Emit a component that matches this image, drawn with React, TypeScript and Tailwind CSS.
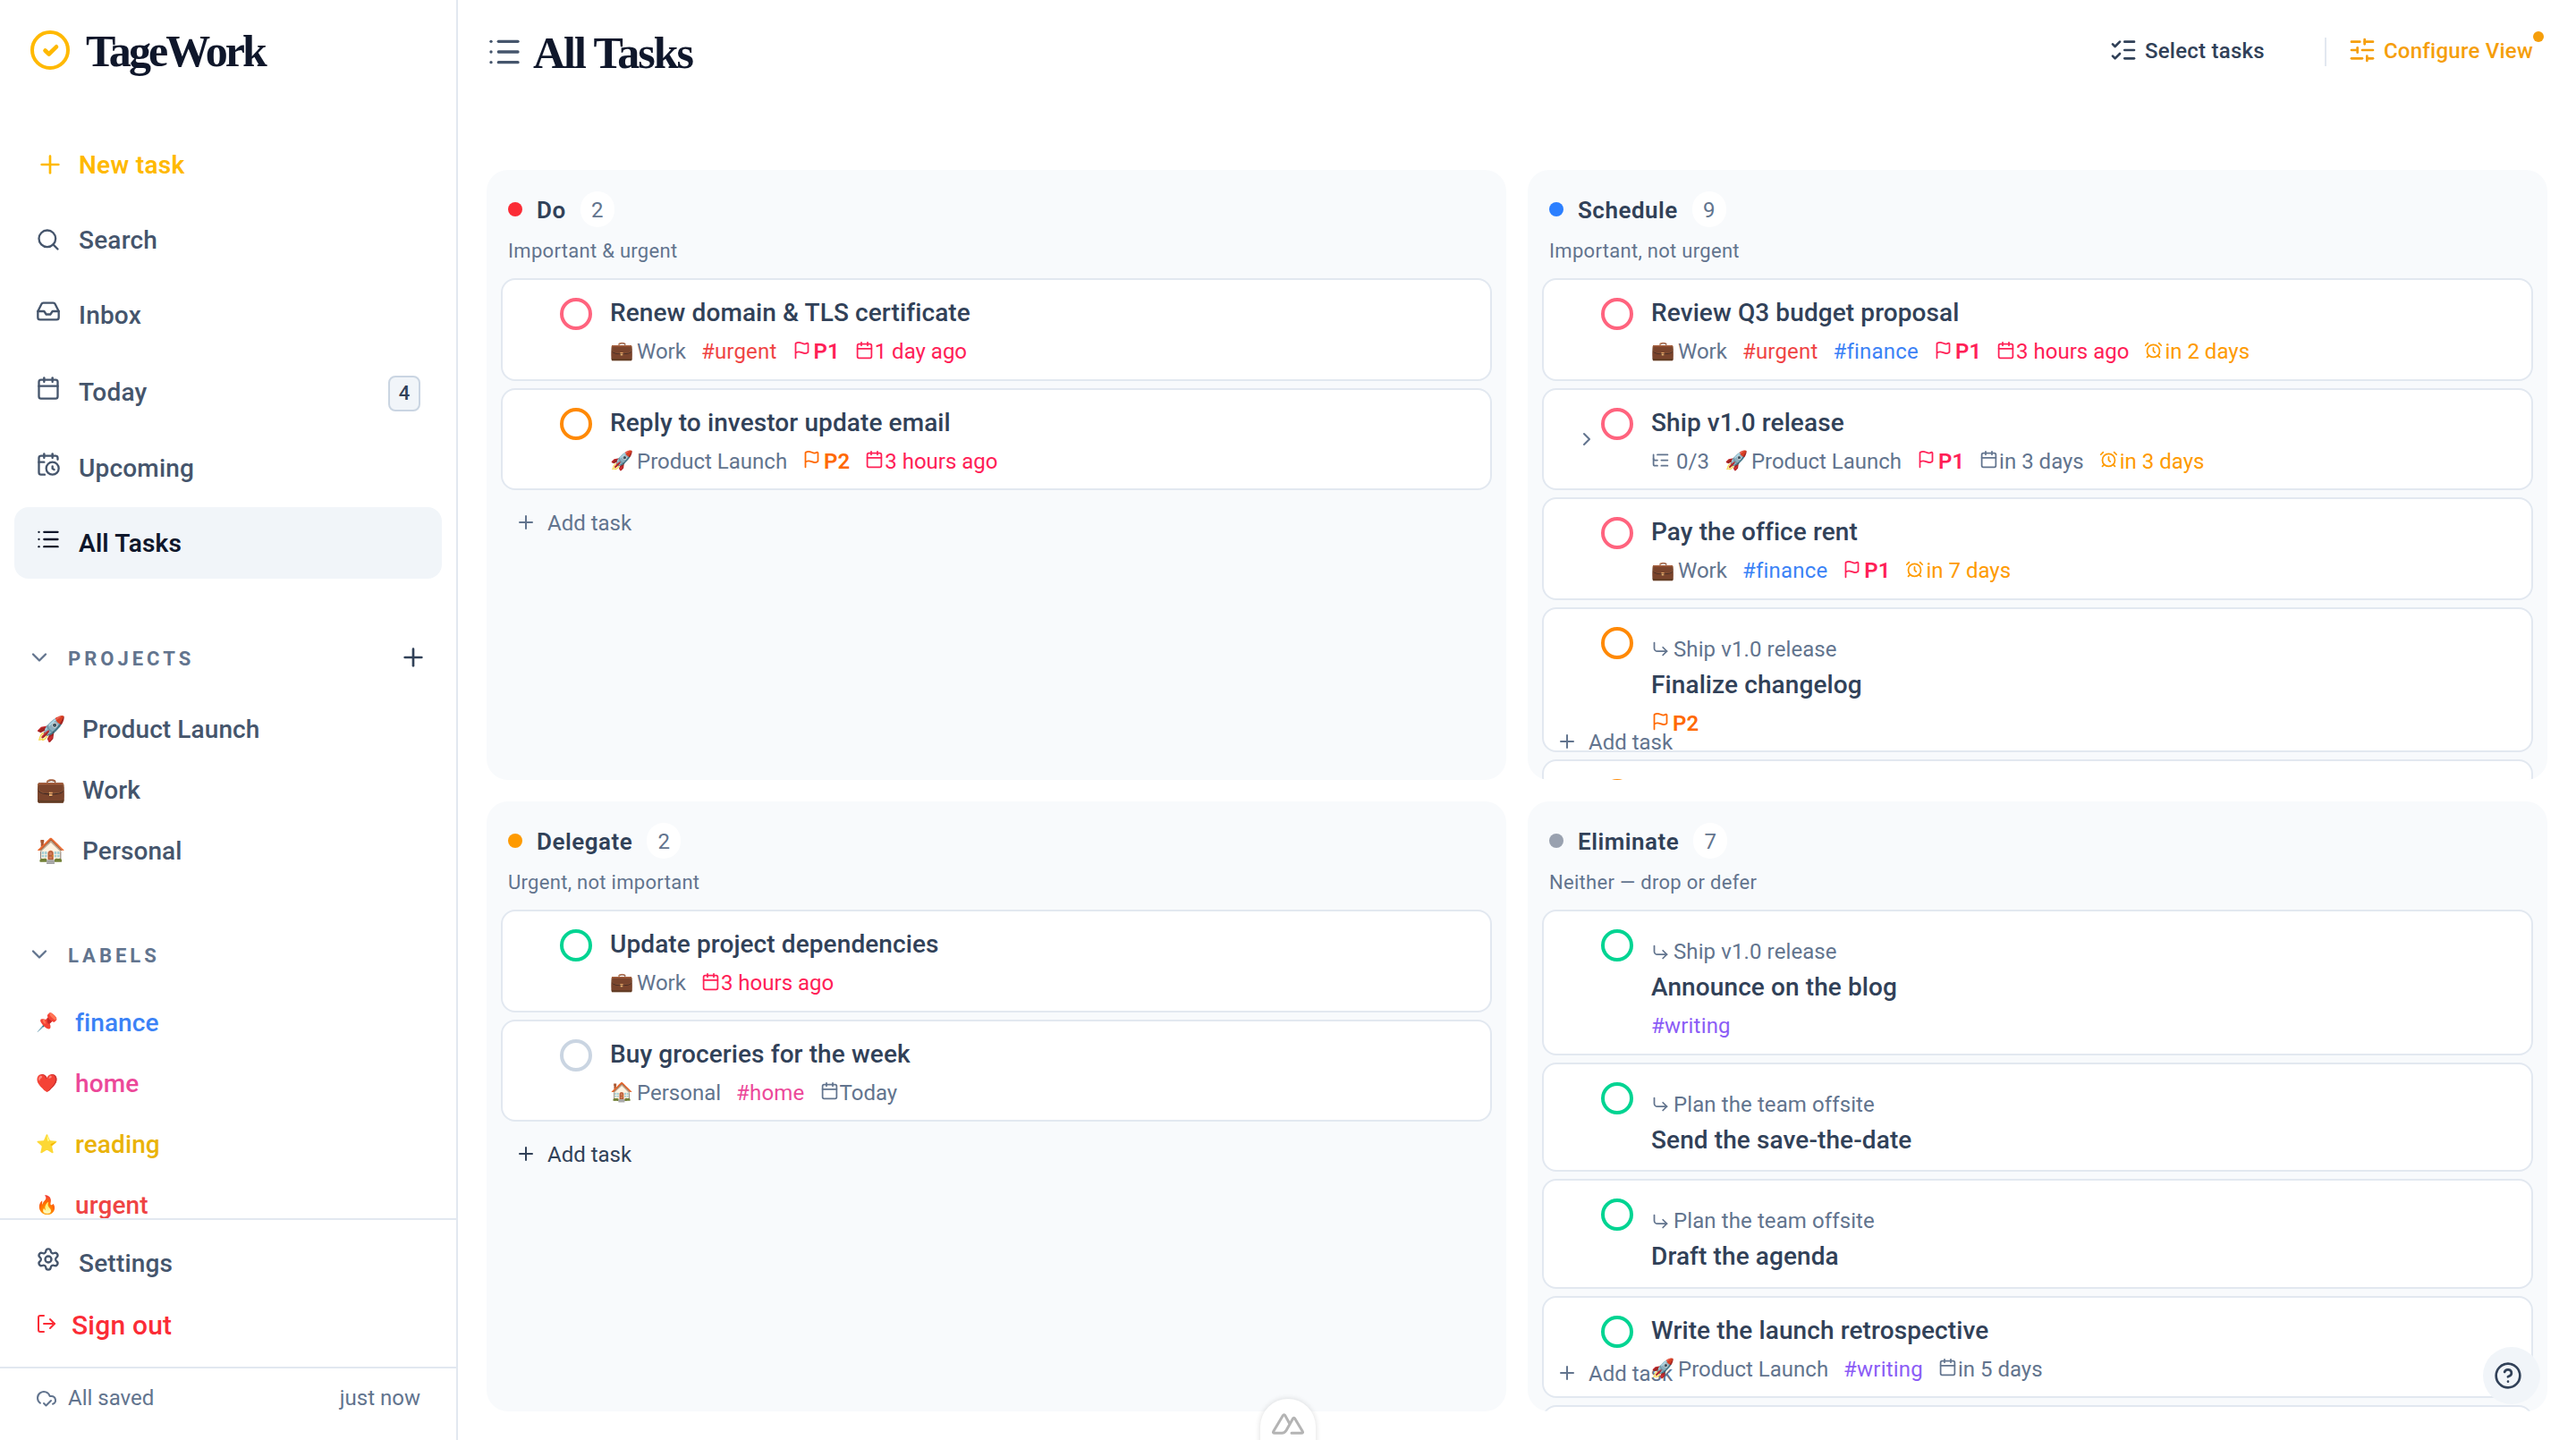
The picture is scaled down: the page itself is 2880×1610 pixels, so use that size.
import type { ReactNode } from "react";
import { clsx as cn } from "clsx";
import {
  AlarmClock,
  Calendar,
  CalendarClock,
  ChevronDown,
  ChevronRight,
  CircleQuestionMark,
  CloudCheck,
  CornerDownRight,
  Flag,
  Inbox,
  List,
  ListChecks,
  ListTree,
  LogOut,
  Plus,
  Search,
  Settings,
  SlidersHorizontal,
  type LucideIcon,
} from "lucide-react";

type Priority = "p1" | "p2" | "p3" | "none";

type Meta =
  | { kind: "subtasks"; text: string }
  | { kind: "project"; emoji: string; text: string }
  | { kind: "label"; text: string; color: string }
  | { kind: "priority"; text: string; color: string }
  | { kind: "due"; text: string; overdue?: boolean }
  | { kind: "reminder"; text: string };

interface Task {
  title: string;
  priority: Priority;
  parent?: string;
  expandable?: boolean;
  meta: Meta[];
}

interface Quadrant {
  name: string;
  count: number;
  hint: string;
  dot: string;
  tasks: Task[];
  hovered?: boolean;
}

const ringColors: Record<Priority, string> = {
  p1: "border-[#ff637e]",
  p2: "border-[#ff8904]",
  p3: "border-[#00d492]",
  none: "border-slate-300",
};

const work: Meta = { kind: "project", emoji: "💼", text: "Work" };
const launch: Meta = { kind: "project", emoji: "🚀", text: "Product Launch" };
const personal: Meta = { kind: "project", emoji: "🏠", text: "Personal" };

const urgent: Meta = { kind: "label", text: "#urgent", color: "text-[#ef4444]" };
const finance: Meta = { kind: "label", text: "#finance", color: "text-[#3b82f6]" };
const home: Meta = { kind: "label", text: "#home", color: "text-[#ec4899]" };
const writing: Meta = { kind: "label", text: "#writing", color: "text-[#8b5cf6]" };

const p1: Meta = { kind: "priority", text: "P1", color: "text-[#ff2056]" };
const p2: Meta = { kind: "priority", text: "P2", color: "text-[#ff6900]" };

const quadrants: Quadrant[] = [
  {
    name: "Do",
    count: 2,
    hint: "Important & urgent",
    dot: "bg-[#fb2c36]",
    tasks: [
      {
        title: "Renew domain & TLS certificate",
        priority: "p1",
        meta: [work, urgent, p1, { kind: "due", text: "1 day ago", overdue: true }],
      },
      {
        title: "Reply to investor update email",
        priority: "p2",
        meta: [launch, p2, { kind: "due", text: "3 hours ago", overdue: true }],
      },
    ],
  },
  {
    name: "Schedule",
    count: 9,
    hint: "Important, not urgent",
    dot: "bg-[#2b7fff]",
    tasks: [
      {
        title: "Review Q3 budget proposal",
        priority: "p1",
        meta: [
          work,
          urgent,
          finance,
          p1,
          { kind: "due", text: "3 hours ago", overdue: true },
          { kind: "reminder", text: "in 2 days" },
        ],
      },
      {
        title: "Ship v1.0 release",
        priority: "p1",
        expandable: true,
        meta: [
          { kind: "subtasks", text: "0/3" },
          launch,
          p1,
          { kind: "due", text: "in 3 days" },
          { kind: "reminder", text: "in 3 days" },
        ],
      },
      {
        title: "Pay the office rent",
        priority: "p1",
        meta: [work, finance, p1, { kind: "reminder", text: "in 7 days" }],
      },
      {
        title: "Finalize changelog",
        priority: "p2",
        parent: "Ship v1.0 release",
        meta: [p2],
      },
      { title: "", priority: "p2", meta: [] },
    ],
  },
  {
    name: "Delegate",
    count: 2,
    hint: "Urgent, not important",
    dot: "bg-[#fe9a00]",
    hovered: true,
    tasks: [
      {
        title: "Update project dependencies",
        priority: "p3",
        meta: [work, { kind: "due", text: "3 hours ago", overdue: true }],
      },
      {
        title: "Buy groceries for the week",
        priority: "none",
        meta: [personal, home, { kind: "due", text: "Today" }],
      },
    ],
  },
  {
    name: "Eliminate",
    count: 7,
    hint: "Neither — drop or defer",
    dot: "bg-[#99a1af]",
    tasks: [
      {
        title: "Announce on the blog",
        priority: "p3",
        parent: "Ship v1.0 release",
        meta: [writing],
      },
      { title: "Send the save-the-date", priority: "p3", parent: "Plan the team offsite", meta: [] },
      { title: "Draft the agenda", priority: "p3", parent: "Plan the team offsite", meta: [] },
      {
        title: "Write the launch retrospective",
        priority: "p3",
        meta: [launch, writing, { kind: "due", text: "in 5 days" }],
      },
      { title: "", priority: "p3", meta: [] },
    ],
  },
];

const navItems: { label: string; icon: LucideIcon; badge?: string; active?: boolean; raised?: boolean }[] = [
  { label: "Search", icon: Search },
  { label: "Inbox", icon: Inbox, raised: true },
  { label: "Today", icon: Calendar, badge: "4", raised: true },
  { label: "Upcoming", icon: CalendarClock, raised: true },
  { label: "All Tasks", icon: List, active: true, raised: true },
];

const projects = [
  { emoji: "🚀", name: "Product Launch" },
  { emoji: "💼", name: "Work" },
  { emoji: "🏠", name: "Personal" },
];

const labels = [
  { emoji: "📌", name: "finance", color: "text-[#3b82f6]" },
  { emoji: "❤️", name: "home", color: "text-[#ec4899]" },
  { emoji: "⭐", name: "reading", color: "text-[#eab308]" },
  { emoji: "🔥", name: "urgent", color: "text-[#ef4444]" },
];

const SectionHeader = ({ title, className, children }: { title: string; className: string; children?: ReactNode }) => (
  <div className={cn("flex h-12 shrink-0 items-center pl-[14px] pr-4", className)}>
    <ChevronDown className="size-7 text-slate-500" />
    <h2 className="ml-[18px] flex-1 pt-0.5 text-[22px] font-bold tracking-[4px] text-slate-500">{title}</h2>
    {children}
  </div>
);

const Sidebar = () => (
  <aside className="flex w-[512px] shrink-0 flex-col border-r-2 border-slate-200">
    <div className="flex min-h-0 flex-1 flex-col overflow-hidden px-4">
      <div className="flex h-28 shrink-0 items-center gap-[18px] pl-[18px]">
        <svg viewBox="0 0 44 44" className="size-11" fill="none" stroke="#ffb900" strokeLinecap="round" strokeLinejoin="round">
          <circle cx="22" cy="22" r="20" strokeWidth="4" />
          <path d="M16.5 22.5l4.2 4L29 18.3" strokeWidth="4.6" />
        </svg>
        <span className="pt-0.5 font-['Liberation_Serif',serif] text-[50px] font-bold leading-none tracking-[-2.9px] text-slate-900">
          TageWork
        </span>
      </div>

      <nav className="mt-8 flex shrink-0 flex-col gap-1">
        <button className="flex h-20 items-center gap-4 pl-6 text-[28px] font-semibold tracking-[0.3px] text-[#ffb900]">
          <Plus className="size-8" />
          <span className="pt-0.5">New task</span>
        </button>
        {navItems.map(({ label, icon: Icon, badge, active, raised }) => (
          <a
            key={label}
            className={cn(
              "flex items-center rounded-2xl pl-6 pr-6 text-[28px] tracking-[0.2px]",
              badge ? "h-[83px]" : "h-20",
              active ? "bg-slate-100 font-semibold text-slate-900" : "font-medium text-slate-600"
            )}
          >
            <Icon className={cn("mr-5 size-7", raised && "mb-2")} />
            <span className="flex-1 pt-0.5">{label}</span>
            {badge && (
              <span className="mt-1 flex h-10 w-9 items-center justify-center rounded-lg border-2 border-slate-300 bg-slate-100 text-[22px] text-slate-700">
                {badge}
              </span>
            )}
          </a>
        ))}
      </nav>

      <SectionHeader title="PROJECTS" className="mt-[64px]">
        <Plus className="size-8 text-slate-700" />
      </SectionHeader>
      <ul className="mt-[22px] shrink-0">
        {projects.map((project) => (
          <li key={project.name} className="flex h-[68px] items-center pl-6 text-[28px] font-medium text-slate-600">
            <span className="w-[52px] text-[27px]">{project.emoji}</span>
            <span className="pt-0.5 tracking-[0.1px]">{project.name}</span>
          </li>
        ))}
      </ul>

      <SectionHeader title="LABELS" className="mt-[58px]" />
      <ul className="mt-[18px] shrink-0">
        {labels.map((label) => (
          <li key={label.name} className={cn("flex h-[68px] items-center pl-6 text-[28px] font-medium", label.color)}>
            <span className="w-[44px] text-[20px]">{label.emoji}</span>
            <span className="pt-0.5 tracking-[0.1px]">{label.name}</span>
          </li>
        ))}
      </ul>
    </div>

    <div className="h-[166px] shrink-0 border-t-2 border-slate-200 px-4 pt-[14px]">
      <a className="flex h-[68px] items-center gap-5 pl-6 text-[28px] font-medium text-slate-600">
        <Settings className="mb-2 size-7" />
        <span className="pt-0.5 tracking-[0.2px]">Settings</span>
      </a>
      <button className="flex h-[68px] items-center gap-4 pl-6 text-[30px] font-medium text-[#fb2c36]">
        <LogOut className="size-6" />
        <span className="pt-0.5 tracking-[0.2px]">Sign out</span>
      </button>
    </div>
    <div className="flex h-[82px] shrink-0 items-center border-t-2 border-slate-200 pb-[14px] pl-10 pr-10 text-[24px] text-slate-500">
      <CloudCheck className="mr-3 size-6" />
      <span className="flex-1">All saved</span>
      <span>just now</span>
    </div>
  </aside>
);

const MetaItem = ({ item }: { item: Meta }) => {
  switch (item.kind) {
    case "subtasks":
      return (
        <span className="flex items-center gap-[7px]">
          <ListTree className="mb-0.5 size-[21px]" />
          {item.text}
        </span>
      );
    case "project":
      return (
        <span className="flex items-center">
          <span className="w-[30px] text-[21px]">{item.emoji}</span>
          {item.text}
        </span>
      );
    case "label":
      return <span className={cn("tracking-[0.2px]", item.color)}>{item.text}</span>;
    case "priority":
      return (
        <span className={cn("flex items-center gap-[3px] font-semibold", item.color)}>
          <Flag className="mb-1 size-[21px]" />
          {item.text}
        </span>
      );
    case "due":
      return (
        <span className={cn("flex items-center gap-px", item.overdue && "text-[#ff2056]")}>
          <Calendar className="mb-1 size-[21px]" />
          {item.text}
        </span>
      );
    case "reminder":
      return (
        <span className="flex items-center gap-0.5 text-[#fe9a00]">
          <AlarmClock className="mb-1 size-[21px]" />
          {item.text}
        </span>
      );
  }
};

const TaskCard = ({ task }: { task: Task }) => (
  <li
    className={cn(
      "flex shrink-0 rounded-2xl border-2 border-slate-200 bg-white",
      !task.parent && "h-[114.67px]",
      task.parent && (task.meta.length > 0 ? "h-[162.5px]" : "h-[122.5px]")
    )}
  >
    <div className="flex w-16 shrink-0 items-center justify-end pr-1">
      {task.expandable && <ChevronRight className="size-6 text-slate-500" />}
    </div>
    <div className={cn("mt-5 size-9 shrink-0 rounded-full border-4", ringColors[task.priority])} />
    <div className="ml-5 flex flex-col pt-[13px]">
      {task.parent && (
        <div className="mt-3 flex h-10 shrink-0 items-center gap-1 text-[24px] tracking-[0.1px] text-slate-500">
          <CornerDownRight className="size-[21px]" />
          {task.parent}
        </div>
      )}
      <h3
        className={cn(
          "flex h-12 shrink-0 items-center text-[28px] font-medium tracking-[0.1px] text-slate-700",
          task.parent && "-mt-1"
        )}
      >
        {task.title}
      </h3>
      {/* the meta line stays above the add button when a list overflows */}
      {task.meta.length > 0 && (
        <div className="relative z-10 mt-px flex h-9 shrink-0 items-center gap-[17px] text-[24px] text-slate-500">
          {task.meta.map((item) => (
            <MetaItem key={item.kind + item.text} item={item} />
          ))}
        </div>
      )}
    </div>
  </li>
);

const QuadrantPanel = ({ quadrant }: { quadrant: Quadrant }) => (
  <section className="flex min-h-0 flex-col overflow-hidden rounded-3xl bg-slate-50 px-4 pb-[17px] pt-6">
    <header className="shrink-0 pl-2">
      <div className="flex h-10 items-center gap-4">
        <span className={cn("size-4 rounded-full", quadrant.dot)} />
        <h2 className="pt-0.5 text-[26px] font-semibold tracking-[0.5px] text-slate-700">{quadrant.name}</h2>
        <span className="flex h-10 w-[38px] items-center justify-center rounded-full bg-white pt-0.5 text-[24px] text-slate-500">
          {quadrant.count}
        </span>
      </div>
      <p className="mt-2 h-[49px] text-[22px] leading-[37px] tracking-[0.3px] text-slate-500">{quadrant.hint}</p>
    </header>
    <ul className="flex min-h-0 flex-col gap-2">
      {quadrant.tasks.map((task, i) => (
        <TaskCard key={i} task={task} />
      ))}
    </ul>
    <button
      className={cn(
        "mt-[10px] flex h-[52px] shrink-0 items-center gap-3 pl-4 text-[24px]",
        quadrant.hovered ? "text-slate-700" : "text-slate-500"
      )}
    >
      <Plus className="size-6" />
      <span className="pt-0.5">Add task</span>
    </button>
  </section>
);

const NuxtMark = () => (
  <svg viewBox="0 0 36 24" className="h-6 w-9" fill="none" stroke="#b4b4b4" strokeWidth="3" strokeLinecap="round" strokeLinejoin="round">
    <path d="M22 22.3H33q2.2 0 1.2-2L25.8 6.2q-1.2-1.8-2.4 0L16.2 19q-2 3.3-5 3.3H3q-2.2 0-1.2-2L12.4 2.6q1.2-1.8 2.4 0L19.4 11" />
  </svg>
);

export default function App() {
  return (
    <div className="relative flex h-[1610px] w-[2880px] overflow-hidden bg-white font-['Roboto','Noto_Color_Emoji',sans-serif]">
      <Sidebar />

      <main className="flex min-w-0 flex-1 flex-col pb-8 pl-8 pr-8">
        <header className="flex h-[190px] shrink-0 items-start">
          <div className="flex h-[116px] items-center">
            <List className="size-10 text-slate-600" />
            <h1 className="ml-3 pt-0.5 font-['Liberation_Serif',serif] text-[50px] font-bold leading-none tracking-[-2px] text-slate-900">
              All Tasks
            </h1>
          </div>
          <div className="ml-auto flex h-28 items-center text-[24px] font-medium tracking-[0.25px]">
            <button className="flex items-center gap-2 text-slate-700">
              <ListChecks className="size-8" />
              <span className="pt-0.5">Select tasks</span>
            </button>
            <span className="ml-[67px] mr-6 mt-1 h-8 w-0.5 bg-slate-200" />
            <button className="relative mr-4 flex items-center gap-2 text-[#f59e0b]">
              <SlidersHorizontal className="size-8" />
              <span className="pt-0.5">Configure View</span>
              <span className="absolute -right-3 -top-0.5 size-3 rounded-full bg-[#f59e0b]" />
            </button>
          </div>
        </header>

        <div className="grid min-h-0 flex-1 grid-cols-2 grid-rows-[repeat(2,minmax(0,1fr))] gap-6">
          {quadrants.map((quadrant) => (
            <QuadrantPanel key={quadrant.name} quadrant={quadrant} />
          ))}
        </div>
      </main>

      <div className="absolute -bottom-[14px] left-[1409px] flex h-[60px] w-[62px] justify-center rounded-t-full bg-white pt-4 shadow-[0_0_6px_rgba(0,0,0,0.14)]">
        <NuxtMark />
      </div>
      <button className="absolute bottom-10 right-10 flex size-16 items-center justify-center rounded-full bg-slate-100 pr-2 text-slate-700">
        <CircleQuestionMark className="size-8" />
      </button>
    </div>
  );
}
